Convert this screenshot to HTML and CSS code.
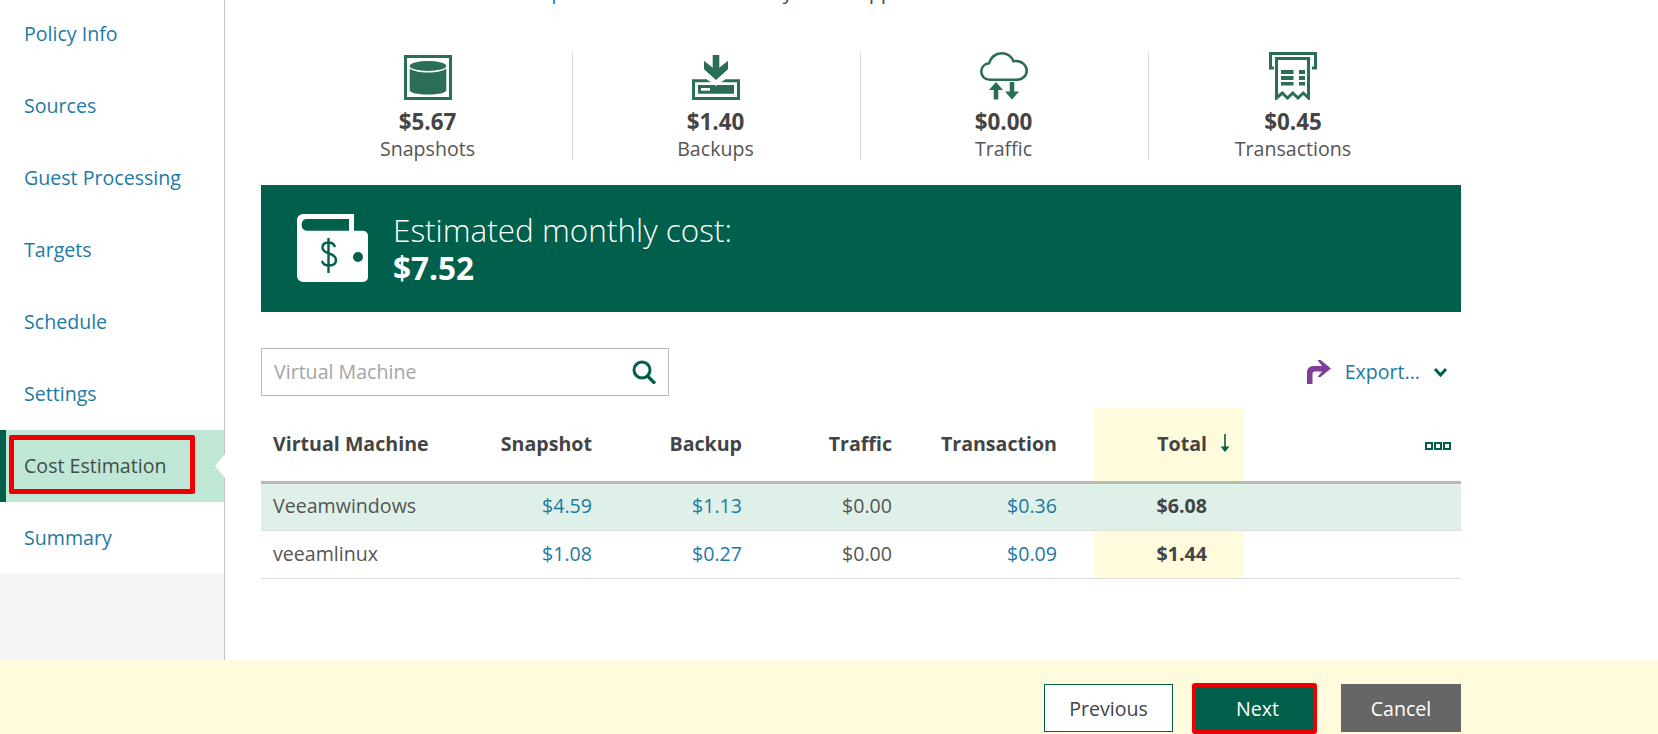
FILE: index.html
```html
<!DOCTYPE html>
<html lang="en">
<head>
<meta charset="utf-8">
<title>Cost Estimation</title>
<link rel="stylesheet" href="styles.css">
</head>
<body>
<div class="app">
  <div class="main">
    <nav class="side">
      <ul class="steps">
        <li class="step">Policy Info</li>
        <li class="step">Sources</li>
        <li class="step">Guest Processing</li>
        <li class="step">Targets</li>
        <li class="step">Schedule</li>
        <li class="step">Settings</li>
        <li class="step active">Cost Estimation<span class="mark"></span></li>
        <li class="step">Summary</li>
      </ul>
    </nav>
    <section class="content">
      <p class="clipped">The estimated costs based on <span class="link">price list</span> and the monthly totals appear</p>
      <div class="stats">
        <div class="stat">
          <svg class="ico" width="48" height="48" viewBox="0 0 48 48"><rect x="1.5" y="4.5" width="45" height="42" fill="none" stroke="#2a6e55" stroke-width="3"/><ellipse cx="24" cy="14" rx="18.300" ry="5" fill="#2a6e55"/><path d="M5.700 16.500c3 2.500 10 4 18.300 4s15.300-1.500 18.300-4V38c0 3-8 4.500-18.300 4.500S5.700 41 5.700 38z" fill="#2a6e55"/></svg>
          <div class="amt">$5.67</div><div class="lab">Snapshots</div>
        </div>
        <div class="stat">
          <svg class="ico" width="48" height="48" viewBox="0 0 48 48"><path d="M0 27.300h48V48H0z" fill="#2a6e55"/><path d="M3 30.300h42V45H3z" fill="#fff"/><path d="M6 33h36v8.700H6z" fill="#2a6e55"/><path d="M9 36h9v2.700H9z" fill="#fff"/><path d="M15 26h18v1.500l-9 6.500-9-6.500z" fill="#fff"/><path d="M20.700 3h6.600v12.700L36 8.700v8.600L24 28 12 17.300V8.700l8.700 7z" fill="#2a6e55"/></svg>
          <div class="amt">$1.40</div><div class="lab">Backups</div>
        </div>
        <div class="stat">
          <svg class="ico" width="48" height="48" viewBox="0 0 48 48"><path d="M10 27.700C4.500 27.700 1.300 24 1.300 19.700c0-4.200 3-7.700 7.700-8.400C10.500 5.500 15.500 1.300 21.500 1.300c5.500 0 10 3.300 12 8 .8-.2 1.700-.3 2.500-.3 6 0 10.700 4.500 10.700 9.500 0 5.200-4 9.200-9.700 9.200z" fill="none" stroke="#2a6e55" stroke-width="2.600"/><path d="M16 30l7 8h-4.700v9.500h-4.600V38H9z" fill="#2a6e55"/><path d="M29.700 30h4.600v9.500H39l-7 8-7-8h4.700z" fill="#2a6e55"/></svg>
          <div class="amt">$0.00</div><div class="lab">Traffic</div>
        </div>
        <div class="stat last">
          <svg class="ico" width="48" height="48" viewBox="0 0 48 48"><path d="M5 16H1.500V1.500h45V16H43" fill="none" stroke="#2a6e55" stroke-width="3"/><path d="M7.500 6.500h32v39.500l-5.300-5-5.200 5-5.200-5-5.300 5-5.200-5-5.800 5z" fill="none" stroke="#2a6e55" stroke-width="3"/><path d="M12 18h12.500v4H12zM30 18h6v4h-6zM12 24h12.500v4H12zM30 24h6v4h-6zM12 30h12.500v3.500H12zM30 30h6v3.500h-6z" fill="#2a6e55"/></svg>
          <div class="amt">$0.45</div><div class="lab">Transactions</div>
        </div>
      </div>
      <div class="banner">
        <svg class="wallet" width="71" height="68" viewBox="0 0 71 68"><path d="M6 0h51v16.700h9a5 5 0 0 1 5 5V63a5 5 0 0 1-5 5H6a6 6 0 0 1-6-6V6a6 6 0 0 1 6-6z" fill="#fff"/><path d="M10 5h42v11.700H10a5 5 0 0 1-5.300-5V10A5 5 0 0 1 10 5z" fill="#00604b"/><circle cx="61" cy="43" r="5" fill="#00604b"/><path d="M38 33c-1-3-3-4.500-6.500-4.500-4 0-6 2.200-6 5.200 0 7 13.500 4.300 13.500 12.300 0 3.300-2.500 5.500-7 5.500-3.500 0-6-1.500-7-4.700M31.500 24v35" fill="none" stroke="#00604b" stroke-width="2.400"/></svg>
        <div class="bantext">
          <div class="bant">Estimated monthly cost:</div>
          <div class="banv">$7.52</div>
        </div>
      </div>
      <div class="tools">
        <div class="search">
          <span class="ph">Virtual Machine</span>
          <svg width="25" height="24" viewBox="0 0 25 24"><circle cx="10" cy="10" r="8" fill="none" stroke="#00604b" stroke-width="3"/><path d="M15.500 16l7.500 7.500" stroke="#00604b" stroke-width="3.400" fill="none"/></svg>
        </div>
        <div class="export">
          <svg width="24" height="24" viewBox="0 0 24 24"><path d="M0 24V12a6 6 0 0 1 6-6h9L10.500 0h3L24 8.500 13.500 17h-3l4.500-5.500H8a2.500 2.500 0 0 0-2.500 2.500V24z" fill="#7d3f98"/></svg>
          <span class="exp">Export...</span>
          <svg width="15" height="11" viewBox="0 0 15 11"><path d="M2 2l5.500 6L13 2" fill="none" stroke="#00604b" stroke-width="3"/></svg>
        </div>
      </div>
      <table class="grid">
        <colgroup><col class="c-name"><col class="c-num"><col class="c-num"><col class="c-num"><col class="c-tr"><col class="c-num"><col></colgroup>
        <thead>
          <tr>
            <th class="name">Virtual Machine</th><th>Snapshot</th><th>Backup</th><th>Traffic</th><th>Transaction</th>
            <th class="tot">Total<svg class="sort" width="10" height="18" viewBox="0 0 10 18"><path d="M5 0v14" stroke="#00604b" stroke-width="1.600"/><path d="M0.500 12.500h9L5 18z" fill="#00604b"/></svg></th>
            <th class="act"><span class="dots"><i></i><i></i><i></i></span></th>
          </tr>
        </thead>
        <tbody>
          <tr class="sel"><td class="name">Veeamwindows</td><td class="l">$4.59</td><td class="l">$1.13</td><td>$0.00</td><td class="l">$0.36</td><td class="tot">$6.08</td><td></td></tr>
          <tr><td class="name">veeamlinux</td><td class="l">$1.08</td><td class="l">$0.27</td><td>$0.00</td><td class="l">$0.09</td><td class="tot">$1.44</td><td></td></tr>
        </tbody>
      </table>
    </section>
  </div>
  <footer class="foot">
    <button class="btn prev">Previous</button>
    <button class="btn next">Next</button>
    <button class="btn cancel">Cancel</button>
  </footer>
</div>
</body>
</html>
```
FILE: styles.css
```css
* { box-sizing: border-box; }
html, body { margin: 0; height: 100%; overflow: hidden; }
body { font-family: "Open Sans", sans-serif; font-size: 19.6px; color: #444; background: #fff; }
.app { height: 734px; display: flex; flex-direction: column; overflow: hidden; }
.main { height: 660px; display: flex; flex: none; }
.side { width: 225px; flex: none; background: #f4f4f4; border-right: 1px solid #c4c4c4; }
.steps { list-style: none; margin: -2px 0 0; padding: 0; background: #fff; }
.step { position: relative; height: 72px; display: flex; align-items: center; padding: 0 0 2px 24px; color: #1d7aa5; }
.step.active { background: #c0e6d5; color: #3f4f4b; border-left: 6px solid #00604b; padding-left: 18px; }
.step.active::after { content: ""; position: absolute; right: -1px; top: 24px; border-style: solid; border-width: 12px 10px 12px 0; border-color: transparent #fff transparent transparent; }
.mark { position: absolute; left: 3px; top: 5px; width: 186px; height: 59px; border: 5px solid #ee0000; border-radius: 2px; }
.content { flex: 1; padding: 0 197px 0 36px; min-width: 0; }
.clipped { margin: -21px 0 0; height: 25px; line-height: 25px; white-space: nowrap; color: #444; padding-left: 3px; word-spacing: 2.2px; }
.link { color: #1d7aa5; }
.stats { display: flex; margin-top: 48px; padding-left: 24px; height: 108px; }
.stat { width: 288px; height: 108px; padding-right: 2px; border-right: 1px solid #dcdcdc; display: flex; flex-direction: column; align-items: center; }
.stat.last { border-right: 0; padding-right: 0; }
.ico { display: block; flex: none; }
.amt { font-weight: 700; font-size: 22.400px; line-height: 30px; margin-top: 7px; color: #444; }
.lab { line-height: 24px; color: #555; }
.banner { margin-top: 25px; height: 127px; background: #00604b; display: flex; align-items: center; padding-left: 36px; color: #fff; }
.wallet { flex: none; margin-top: -1px; }
.bantext { margin-left: 25px; }
.bant { font-size: 31.500px; line-height: 38px; font-weight: 300; }
.banv { font-size: 31.500px; line-height: 38px; font-weight: 700; }
.tools { display: flex; justify-content: space-between; align-items: center; margin-top: 36px; height: 48px; }
.search { width: 408px; height: 48px; border: 1px solid #bbb; display: flex; align-items: center; justify-content: space-between; padding: 0 11px 0 12px; }
.ph { color: #a5a5a5; padding-bottom: 2px; }
.export { display: flex; align-items: center; padding-right: 13px; }
.exp { color: #1d7aa5; margin: 0 13px 0 14px; padding-bottom: 1px; }
.grid { width: 100%; table-layout: fixed; border-collapse: collapse; margin-top: 12px; }
.c-name { width: 218px; }
.c-num { width: 150px; }
.c-tr { width: 165px; }
.grid th { height: 74px; text-align: right; padding: 0 37px 2px 0; font-weight: 700; color: #444; border-bottom: 3px solid #b7b9b5; }
.grid td { height: 48px; text-align: right; padding: 0 37px 2px 0; border-bottom: 1px solid #dcdfdd; color: #555; }
.grid .name { text-align: left; padding: 0 0 2px 12px; }
.grid td.l { color: #1d7aa5; }
.grid .tot { background: #fffbdc; font-weight: 700; color: #444; position: relative; }
.grid .sel td { background: #dff0e8; }
.sort { position: absolute; left: 126px; top: 26px; }
.grid .act { padding-right: 10px; }
.dots { display: inline-flex; gap: 1px; vertical-align: middle; }
.dots i { width: 8px; height: 8px; border: 2px solid #00604b; display: block; }
.foot { height: 74px; flex: none; background: #fffbdc; display: flex; align-items: flex-start; padding: 24px 0 0 1044px; }
.btn { font: 19.6px "Open Sans", sans-serif; height: 48px; padding: 0; }
.prev { width: 129px; background: #fff; border: 1px solid #00604b; color: #444; }
.next { background: #00604b; color: #fff; border: 4px solid #ee0000; border-radius: 3px; width: 125px; height: 51px; margin: -1px 0 0 19px; padding-left: 6px; }
.cancel { background: #666; color: #fff; border: 0; width: 120px; margin-left: 24px; }
```
